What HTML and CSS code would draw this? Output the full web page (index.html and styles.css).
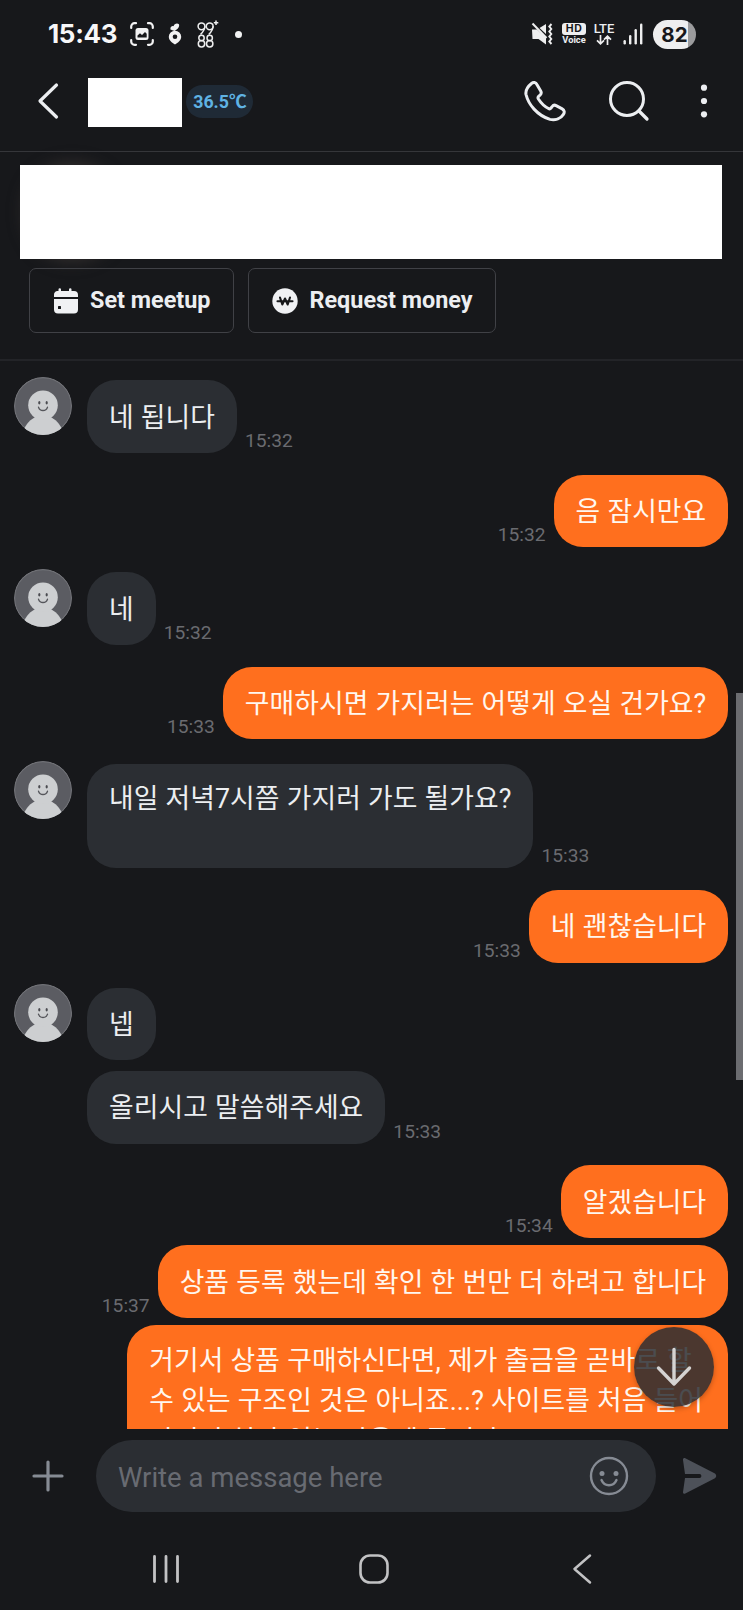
FILE: index.html
```html
<!DOCTYPE html>
<html lang="ko">
<head>
<meta charset="utf-8">
<title>Chat</title>
<link rel="stylesheet" href="styles.css">
</head>
<body>
<svg class="defs" width="0" height="0" aria-hidden="true">
  <symbol id="avatar" viewBox="0 0 58 58">
    <clipPath id="avatar-clip"><circle cx="29" cy="29" r="29"/></clipPath>
    <g clip-path="url(#avatar-clip)">
      <circle cx="29" cy="29" r="29" fill="#5b5c62"/>
      <circle cx="29" cy="29" r="28.4" fill="none" stroke="#707176" stroke-width="1.2"/>
      <path d="M8.500 56 C12 46 17 42 22 40 H36 C41 42 46 46 49.500 56 L40 60 H18 Z" fill="#cdcfd1"/>
      <circle cx="29" cy="28.300" r="14.800" fill="#cdcfd1"/>
      <ellipse cx="25.300" cy="25.800" rx="1.100" ry="1.800" fill="#4a4b50"/>
      <ellipse cx="32.700" cy="25.800" rx="1.100" ry="1.800" fill="#4a4b50"/>
      <path d="M24.500 30.200 C26 34.600 32 34.600 33.500 30.200" fill="none" stroke="#55565b" stroke-width="1.300" stroke-linecap="round"/>
    </g>
  </symbol>
</svg>

<div class="statusbar">
  <span class="clock">15:43</span>
  <svg class="st-capture" width="24" height="24" viewBox="0 0 24 24" fill="none" stroke="#f2f2f3" stroke-width="2.200" stroke-linecap="round">
    <path d="M1.200 6V4.500A3.300 3.300 0 0 1 4.500 1.200H6M18 1.200h1.500a3.300 3.300 0 0 1 3.300 3.300V6M22.800 18v1.500a3.300 3.300 0 0 1-3.300 3.300H18M6 22.800H4.500a3.300 3.300 0 0 1-3.300-3.300V18"/>
    <rect x="5.500" y="6" width="13" height="12" rx="2.500" fill="#f2f2f3" stroke="none"/>
    <path d="M7.500 15.500V13.500L10 11.200l2 1.800 3-3 1.700 1.700v3.800z" fill="#17181b" stroke="none"/>
  </svg>
  <svg class="st-carrot" width="14" height="22" viewBox="0 0 14 22">
    <path d="M7 21.500C4 19.500 0.800 17.500 0.800 13.700A6.200 5.900 0 0 1 13.200 13.700C13.200 17.500 10 19.500 7 21.500Z" fill="#f2f2f3"/>
    <circle cx="7" cy="13.700" r="2.300" fill="#17181b"/>
    <path d="M2.500 6.500C2 3.900 4 2.600 5.600 3.200C6.100 0.600 9.500 -0.200 10.900 1.300C11.900 3.500 9.800 6.300 6.500 8Z" fill="#f2f2f3"/>
  </svg>
  <svg class="st-count" width="22" height="28" viewBox="0 0 22 28" fill="none" stroke="#eeeeef" stroke-width="1.500">
    <circle cx="4.500" cy="6.300" r="3.400"/><path d="M7.900 6.300C7.900 9.500 6 12 3.500 14.500"/>
    <circle cx="12.700" cy="6.300" r="3.400"/><path d="M16.100 6.300C16.100 9.500 14.200 12 11.700 14.500"/>
    <circle cx="4.500" cy="18" r="2.700"/><circle cx="4.500" cy="23.700" r="3.200"/>
    <circle cx="12.700" cy="18" r="2.700"/><circle cx="12.700" cy="23.700" r="3.200"/>
    <path d="M19 0.500v4.500M16.800 2.700h4.500"/>
  </svg>
  <i class="st-dot"></i>
  <div class="st-right">
    <svg width="22" height="24" viewBox="0 0 22 24">
      <path d="M1 7.500H6L15 16V22.500L7.500 17H1.500Z" fill="#eeeeef"/>
      <path d="M8.500 6L15 2V12Z" fill="#eeeeef"/>
      <path d="M1.500 1.500L15.500 16" stroke="#eeeeef" stroke-width="2"/>
      <path d="M20.500 2L18.300 4.500L20.300 7L18.300 9.500L20.300 12L18.300 14.500L20.300 17L18.300 19.500L20.500 22" fill="none" stroke="#eeeeef" stroke-width="1.900"/>
    </svg>
    <div class="st-hd"><b>HD</b><span>Voice</span></div>
    <div class="st-lte"><span>LTE</span>
      <svg width="16" height="10" viewBox="0 0 16 10" fill="none" stroke="#eeeeef" stroke-width="1.700"><path d="M4.500 0v8.500M1 5.300l3.500 3.500L8 5.300M11.500 10V1.500M8 4.700l3.500-3.500L15 4.700"/></svg>
    </div>
    <svg class="st-signal" width="20" height="22" viewBox="0 0 20 22" fill="#eeeeef"><rect x="0.500" y="17" width="2.400" height="4.500" rx="1.200"/><rect x="6" y="12" width="2.400" height="9.500" rx="1.200"/><rect x="11.500" y="6" width="2.400" height="15.500" rx="1.200"/><rect x="17" y="0.500" width="2.400" height="21" rx="1.200"/></svg>
    <div class="battery">82</div>
  </div>
</div>

<header class="header">
  <svg class="h-back" width="22" height="38" viewBox="0 0 22 38" fill="none" stroke="#eceef1" stroke-width="3.200" stroke-linecap="round" stroke-linejoin="round"><path d="M19.500 3L3 19L19.500 35"/></svg>
  <div class="name"></div>
  <span class="temp">36.5℃</span>
  <svg class="h-phone" width="42" height="42" viewBox="0 0 42 42" fill="none" stroke="#eceef1" stroke-width="3" stroke-linejoin="round"><path d="M7.500 3.500C9.300 1.800 11.800 2.300 12.900 4.500L16.700 11C17.600 12.500 17.200 14 16 15.200L14.600 16.400C13.800 17.200 13.800 18 14.400 19C17 23 20.500 26.500 24.500 28.500C25.500 29.100 26.300 28.900 27 28L28.300 26.400C29.200 25.200 30.700 24.900 32.100 25.600L38.200 28.800C40.400 30 40.800 32.300 39.400 34.400C36.800 38.500 31.500 40.700 26 39.400C13 35.200 4.500 24.500 2 14.500C1.200 9.800 4.200 6.200 7.500 3.500Z"/></svg>
  <svg class="h-search" width="42" height="42" viewBox="0 0 42 42" fill="none" stroke="#eceef1" stroke-width="3" stroke-linecap="round"><circle cx="19" cy="19" r="16.500"/><path d="M31 31L39 39" stroke-width="3.300"/></svg>
  <svg class="h-more" width="8" height="36" viewBox="0 0 8 36" fill="#eceef1"><circle cx="4" cy="4.700" r="3.100"/><circle cx="4" cy="18" r="3.100"/><circle cx="4" cy="31.300" r="3.100"/></svg>
</header>

<section class="item">
  <div class="item-card"></div>
  <div class="actions">
    <button class="action">
      <svg width="26" height="26" viewBox="0 0 26 26"><path d="M4 3H5.500V1.500a1.200 1.200 0 0 1 2.500 0V3h8V1.500a1.200 1.200 0 0 1 2.500 0V3H21a4 4 0 0 1 4 4V9H1V7a4 4 0 0 1 3-4ZM1 11H25V21.500a4 4 0 0 1-4 4H5a4 4 0 0 1-4-4Z" fill="#f0f1f4"/><rect x="5" y="18" width="3" height="3" rx="0.600" fill="#17181b"/></svg>
      <span>Set meetup</span>
    </button>
    <button class="action">
      <svg width="26" height="26" viewBox="0 0 26 26"><circle cx="13" cy="13" r="12.700" fill="#f0f1f4"/><path d="M5.500 13.200h15M8 9.500L10.300 16.500L13 10.500L15.700 16.500L18 9.500" fill="none" stroke="#17181b" stroke-width="2.100" stroke-linejoin="round" stroke-linecap="round"/></svg>
      <span>Request money</span>
    </button>
  </div>
</section>

<main class="chat">
  <div class="row in"><svg class="avatar"><use href="#avatar"/></svg><div class="bubble">네 됩니다</div><time>15:32</time></div>
  <div class="row out"><time>15:32</time><div class="bubble">음 잠시만요</div></div>
  <div class="row in"><svg class="avatar"><use href="#avatar"/></svg><div class="bubble">네</div><time>15:32</time></div>
  <div class="row out"><time>15:33</time><div class="bubble">구매하시면 가지러는 어떻게 오실 건가요?</div></div>
  <div class="row in"><svg class="avatar"><use href="#avatar"/></svg><div class="bubble blank-end">내일 저녁7시쯤 가지러 가도 될가요?</div><time>15:33</time></div>
  <div class="row out"><time>15:33</time><div class="bubble">네 괜찮습니다</div></div>
  <div class="row in"><svg class="avatar"><use href="#avatar"/></svg><div class="bubble">넵</div></div>
  <div class="row in follow"><div class="bubble">올리시고 말씀해주세요</div><time>15:33</time></div>
  <div class="row out"><time>15:34</time><div class="bubble">알겠습니다</div></div>
  <div class="row out follow"><time>15:37</time><div class="bubble">상품 등록 했는데 확인 한 번만 더 하려고 합니다</div></div>
  <div class="row out follow"><div class="bubble multi">거기서 상품 구매하신다면, 제가 출금을 곧바로 할<br>수 있는 구조인 것은 아니죠...? 사이트를 처음 들어<br>가서 출처가 있는 사용에 들어가요</div></div>
  <i class="scrollbar"></i>
  <button class="to-bottom" aria-label="Scroll to bottom">
    <svg width="36" height="40" viewBox="0 0 36 40" fill="none" stroke="#d5d3d2" stroke-width="3.400" stroke-linecap="round" stroke-linejoin="round"><path d="M18 2.500V37M2.500 21L18 37L33.500 21"/></svg>
  </button>
</main>

<footer class="composer">
  <svg class="plus" width="32" height="32" viewBox="0 0 32 32" stroke="#868b94" stroke-width="3.200" stroke-linecap="round"><path d="M16 2v28M2 16h28"/></svg>
  <div class="field"><span>Write a message here</span>
    <svg width="40" height="40" viewBox="0 0 40 40" fill="none" stroke="#868b94" stroke-width="2.400" stroke-linecap="round"><circle cx="20" cy="20" r="18"/><circle cx="13" cy="17.500" r="2.500" fill="#868b94" stroke="none"/><circle cx="27" cy="17.500" r="2.500" fill="#868b94" stroke="none"/><path d="M12.500 24C15.500 31 24.500 31 27.500 24"/></svg>
  </div>
  <svg class="send" width="36" height="38" viewBox="0 0 36 38"><path d="M1 3C0.800 1.400 2 0.700 3.300 1.300L32.500 16.300C34.800 17.700 34.800 20.300 32.500 21.600L3.300 36.600C2 37.200 0.800 36.400 1 35L3 20.900H17.500A1.900 1.900 0 0 0 17.500 17.100H3Z" fill="#4d5159"/></svg>
</footer>

<nav class="navbar">
  <svg width="28" height="30" viewBox="0 0 28 30" stroke="#c2c2c4" stroke-width="2.800" stroke-linecap="round"><path d="M2.500 2.500v25M14 2.500v25M25.500 2.500v25"/></svg>
  <svg class="home" width="32" height="32" viewBox="0 0 32 32" fill="none" stroke="#c2c2c4" stroke-width="2.600"><rect x="2.500" y="2.500" width="27" height="27" rx="9.500"/></svg>
  <svg class="back" width="20" height="32" viewBox="0 0 20 32" fill="none" stroke="#c2c2c4" stroke-width="2.500" stroke-linecap="round" stroke-linejoin="round"><path d="M18 2.500L2.500 16L18 29.500"/></svg>
</nav>
</body>
</html>
```
FILE: styles.css
```css
* { box-sizing: border-box; }

body {
  margin: 0;
  width: 743px;
  height: 1610px;
  display: flex;
  flex-direction: column;
  overflow: hidden;
  background: #17181b;
  color: #eceef1;
  font-family: Roboto, "Noto Sans CJK KR", sans-serif;
}

svg { display: block; flex: none; }
button { font: inherit; color: inherit; margin: 0; }
.defs { position: absolute; }

/* Status bar */
.statusbar {
  height: 68px;
  flex: none;
  display: flex;
  align-items: center;
  padding: 0 47px 0 48px;
}
.clock {
  width: 82px;
  font: 700 26px/30px Inter, sans-serif;
  letter-spacing: -0.350px;
  color: #f7f7f8;
}
.st-carrot { margin-left: 14px; }
.st-count { margin-left: 15px; }
.st-dot { width: 7px; height: 7px; margin-left: 16px; border-radius: 50%; background: #f2f2f3; }
.st-right { margin-left: auto; display: flex; align-items: center; }
.st-hd { width: 24px; margin-left: 9px; display: flex; flex-direction: column; align-items: center; }
.st-hd b {
  width: 24px;
  height: 12px;
  border-radius: 3px;
  background: #eeeeef;
  color: #17181b;
  font: 700 10.500px/12px Inter, sans-serif;
  letter-spacing: 0.500px;
  text-align: center;
}
.st-hd span { font: 700 9.300px/10px Roboto, sans-serif; }
.st-lte { width: 22px; margin-left: 7px; display: flex; flex-direction: column; align-items: center; }
.st-lte span { font: 500 13px/12px Roboto, sans-serif; }
.st-signal { margin-left: 8px; }
.battery {
  width: 43px;
  height: 29px;
  margin-left: 10px;
  border-radius: 15px;
  background: linear-gradient(90deg, #eeeeef 35px, #9b9b9d 35px);
  color: #17181b;
  font: 700 20.500px/29px Inter, sans-serif;
  text-align: center;
}

/* Conversation header */
.header {
  height: 84px;
  flex: none;
  display: flex;
  align-items: center;
  padding: 0 35.500px 17px 37px;
  border-bottom: 1px solid #35363a;
}
.name { width: 94px; height: 49px; margin: 3px 0 0 29px; background: #fff; }
.temp {
  width: 67px;
  height: 33px;
  margin: 1px 0 0 4px;
  padding-left: 1px;
  border-radius: 17px;
  background: #1f2a36;
  color: #5fb3e4;
  font-size: 17.800px;
  font-weight: 700;
  line-height: 33px;
  text-align: center;
}
.h-phone { margin-left: auto; }
.h-search { margin-left: 42px; }
.h-more { margin-left: 50px; }

/* Item summary */
.item {
  height: 209px;
  flex: none;
  padding: 13px 21px 0 20px;
  border-bottom: 2px solid #232428;
}
.item-card { position: relative; height: 94px; background: #fff; }
.item-card::before {
  content: "";
  position: absolute;
  z-index: -1;
  left: 20px;
  top: 14px;
  width: 64px;
  height: 66px;
  border-radius: 30px;
  box-shadow: 0 0 16px 16px #332f2e;
}
.actions { display: flex; gap: 14.500px; padding: 9px 0 0 9px; }
.action {
  height: 65px;
  display: flex;
  align-items: center;
  gap: 11px;
  padding: 0 22.500px 0 23px;
  border: 1px solid #404146;
  border-radius: 7px;
  background: none;
}
.action span { font-size: 23.400px; font-weight: 700; line-height: 28px; margin-top: -2px; white-space: nowrap; }

/* Messages */
.chat {
  position: relative;
  height: 1068px;
  flex: none;
  overflow: hidden;
  padding: 16px 14.700px 0 14.300px;
}
.row { display: flex; align-items: flex-end; margin-bottom: 21.850px; }
.row:has(+ .in.follow) { margin-bottom: 11px; }
.row:has(+ .out.follow) { margin-bottom: 7.500px; }
.row.in { padding-top: 3.300px; }
.row.in.follow { padding: 0 0 0 72.700px; }
.row.out { justify-content: flex-end; }
.avatar { width: 58px; height: 58px; margin: -3.300px 14.700px 0 0; align-self: flex-start; }
.bubble {
  padding: 17.300px 22px 15.200px;
  border-radius: 29px;
  background: #2b2e33;
  font-size: 26.800px;
  line-height: 40px;
  letter-spacing: 0.070px;
  word-spacing: 0.400px;
  white-space: nowrap;
}
.out .bubble { background: #ff6f1e; color: #fff7ef; }
.bubble.blank-end { padding: 15px 22px 49px; }
.bubble.multi { padding: 15.500px 22px; width: 601px; }
time { padding: 0 8px 2px; color: #6a6b70; font-size: 19.200px; line-height: 20px; }

.scrollbar { position: absolute; right: 0; top: 332px; width: 7px; height: 387px; background: #6b6c70; }
.to-bottom {
  position: absolute;
  right: 29px;
  bottom: 22px;
  width: 80px;
  height: 80px;
  padding: 0;
  border: 0;
  border-radius: 50%;
  background: rgba(43, 46, 51, 0.85);
  box-shadow: 0 2px 5px rgba(0, 0, 0, 0.25);
  display: flex;
  align-items: center;
  justify-content: center;
}

/* Message composer */
.composer {
  height: 72px;
  flex: none;
  margin-top: 11px;
  display: flex;
  align-items: center;
  padding-left: 32px;
}
.field {
  width: 560px;
  height: 72px;
  margin-left: 32px;
  padding: 0 27px 0 22px;
  border-radius: 36px;
  background: #2b2e33;
  display: flex;
  align-items: center;
  justify-content: space-between;
}
.field span { padding-top: 3px; color: #686b72; font-size: 27.500px; line-height: 40px; }
.send { margin-left: 26px; }

/* System navigation */
.navbar {
  height: 98px;
  flex: none;
  display: flex;
  align-items: center;
  padding: 16px 0 0 152px;
}
.home { margin-left: 177.500px; }
.back { margin-left: 182px; }
```
